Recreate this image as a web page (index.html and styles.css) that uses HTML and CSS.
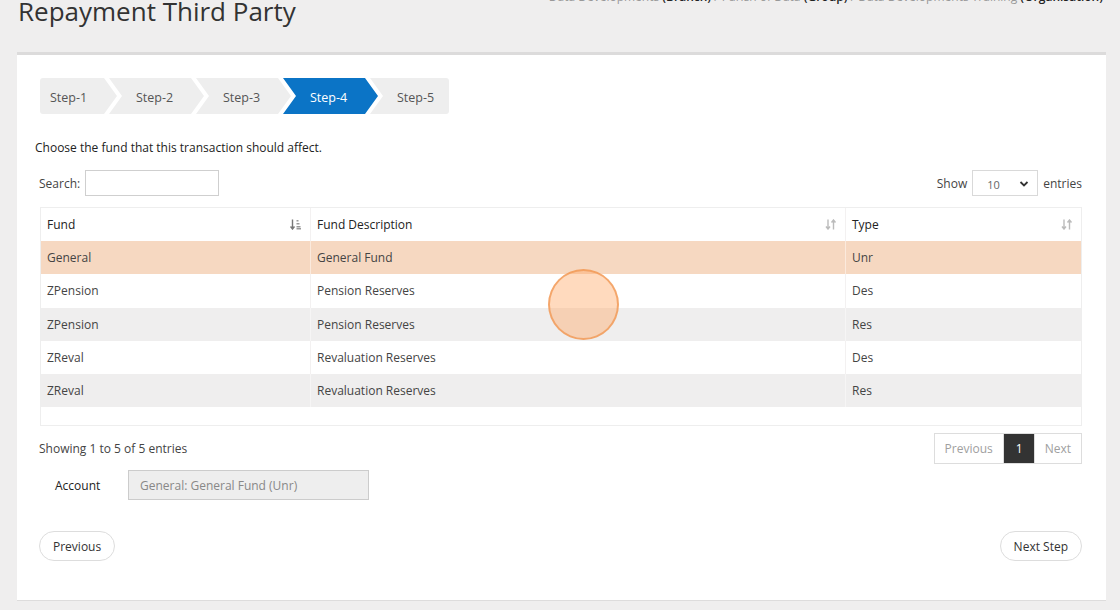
FILE: index.html
```html
<!DOCTYPE html>
<html>
<head>
<meta charset="utf-8">
<link rel="stylesheet" href="styles.css">
</head>
<body>
<div class="page">
  <div class="header">
    <h1 class="title">Repayment Third Party</h1>
    <div class="crumbs">Data Developments <b>(Branch)</b> / Parish of Data <b>(Group)</b> / Data Developments Training <b>(Organisation)</b></div>
  </div>
  <div class="card">
    <div class="steps">
      <div class="step first">Step-1</div>
      <div class="step">Step-2</div>
      <div class="step">Step-3</div>
      <div class="step active">Step-4</div>
      <div class="step last">Step-5</div>
    </div>
    <p class="intro">Choose the fund that this transaction should affect.</p>
    <div class="controls">
      <label class="search">Search: <span class="search-input"></span></label>
      <div class="length">Show <span class="select"><span>10</span><svg width="10" height="8" viewBox="0 0 10 8"><path d="M1.5 2 L5 5.5 L8.5 2" fill="none" stroke="#333" stroke-width="1.8"/></svg></span> entries</div>
    </div>
    <div class="table-wrap">
      <div class="row head">
        <div class="cell c1">Fund<svg class="sort" width="12" height="11" viewBox="0 0 12 11"><path d="M2.5 0.5 V9.5 M0.5 7.5 L2.5 10 L4.5 7.5" fill="none" stroke="#777" stroke-width="1.4"/><rect x="6.5" y="1" width="2" height="1.5" fill="#999"/><rect x="6.5" y="4" width="3" height="1.5" fill="#999"/><rect x="6.5" y="7" width="4" height="1.5" fill="#999"/><rect x="6.5" y="9" width="4.5" height="1.5" fill="#999"/></svg></div>
        <div class="cell c2">Fund Description<svg class="sort faint" width="12" height="11" viewBox="0 0 12 11"><path d="M3 0.5 V10 M1 7.5 L3 10 L5 7.5 M8.5 10.5 V1 M6.5 3.5 L8.5 1 L10.5 3.5" fill="none" stroke="#bbb" stroke-width="1.4"/></svg></div>
        <div class="cell c3">Type<svg class="sort faint" width="12" height="11" viewBox="0 0 12 11"><path d="M3 0.5 V10 M1 7.5 L3 10 L5 7.5 M8.5 10.5 V1 M6.5 3.5 L8.5 1 L10.5 3.5" fill="none" stroke="#bbb" stroke-width="1.4"/></svg></div>
      </div>
      <div class="row selected"><div class="cell c1">General</div><div class="cell c2">General Fund</div><div class="cell c3">Unr</div></div>
      <div class="row"><div class="cell c1">ZPension</div><div class="cell c2">Pension Reserves</div><div class="cell c3">Des</div></div>
      <div class="row odd"><div class="cell c1">ZPension</div><div class="cell c2">Pension Reserves</div><div class="cell c3">Res</div></div>
      <div class="row"><div class="cell c1">ZReval</div><div class="cell c2">Revaluation Reserves</div><div class="cell c3">Des</div></div>
      <div class="row odd"><div class="cell c1">ZReval</div><div class="cell c2">Revaluation Reserves</div><div class="cell c3">Res</div></div>
      <div class="table-foot"></div>
      <div class="click-marker"></div>
    </div>
    <div class="info-row">
      <div class="info">Showing 1 to 5 of 5 entries</div>
      <div class="pager"><span class="pg">Previous</span><span class="pg current">1</span><span class="pg">Next</span></div>
    </div>
    <div class="account">
      <span class="acc-label">Account</span>
      <span class="acc-input">General: General Fund (Unr)</span>
    </div>
    <div class="nav">
      <span class="btn">Previous</span>
      <span class="btn">Next Step</span>
    </div>
  </div>
</div>
</body>
</html>
```
FILE: styles.css
```css
* { box-sizing: border-box; }
html, body { margin: 0; padding: 0; }
body {
  background: #efeeee;
  font-family: "Open Sans", "Liberation Sans", sans-serif;
  font-size: 12px;
  color: #333;
  width: 1120px;
  height: 610px;
  overflow: hidden;
}
.page { padding: 0 14px 0 17px; }
.header {
  height: 52px;
  display: flex;
  justify-content: space-between;
  align-items: flex-start;
}
.title {
  margin: -4px 0 0 1px;
  font-size: 26px;
  font-weight: 400;
  color: #333;
  line-height: 31px;
  white-space: nowrap;
}
.crumbs {
  margin-top: -11px;
  margin-right: 3px;
  color: #999;
  font-size: 12px;
  line-height: 16px;
  white-space: nowrap;
}
.crumbs b { color: #222; font-weight: 600; }
.card {
  background: #fff;
  border-top: 3px solid #dcdbdb;
  border-bottom: 1px solid #dddcdc;
  height: 549px;
  padding: 23px 24px 0 23px;
  position: relative;
}
.steps {
  display: flex;
  height: 36px;
}
.step {
  height: 36px;
  line-height: 36px;
  padding-top: 2px;
  width: 95px;
  margin-right: -8px;
  padding-left: 27px;
  background: #eeeeee;
  color: #555;
  font-size: 12.5px;
  clip-path: polygon(0 0, calc(100% - 13px) 0, 100% 50%, calc(100% - 13px) 100%, 0 100%, 13px 50%);
}
.step.first {
  width: 77px;
  padding-left: 10px;
  border-radius: 3px 0 0 3px;
  clip-path: polygon(0 0, calc(100% - 13px) 0, 100% 50%, calc(100% - 13px) 100%, 0 100%);
}
.step.last {
  width: 79px;
  margin-right: 0;
  border-radius: 0 3px 3px 0;
  clip-path: polygon(0 0, 100% 0, 100% 100%, 0 100%, 13px 50%);
}
.step.active { background: #0b74c6; color: #fff; }
.intro {
  margin: 26px 0 0 -5px;
  line-height: 16px;
  color: #222;
}
.controls {
  margin-top: 14px;
  display: flex;
  justify-content: space-between;
  align-items: center;
  height: 26px;
}
.search { display: flex; align-items: center; gap: 5px; color: #444; margin-left: -1px; }
.search-input {
  display: inline-block;
  width: 134px;
  height: 26px;
  border: 1px solid #cfcfcf;
}
.length { display: flex; align-items: center; gap: 5px; color: #444; }
.select {
  display: inline-flex;
  align-items: center;
  justify-content: space-between;
  width: 66px;
  height: 26px;
  border: 1px solid #d9d9d9;
  padding: 2px 8px 0 14px;
  font-size: 11px;
  color: #666;
}
.table-wrap {
  margin-top: 11px;
  position: relative;
  border: 1px solid #eeeeee;
}
.row {
  display: flex;
  height: 33.3px;
  align-items: stretch;
  color: #444;
}
.row.head { color: #222; height: 33px; }
.row.selected { background: #f6d8c1; }
.row.odd { background: #efeeee; }
.cell {
  display: flex;
  align-items: center;
  justify-content: space-between;
  padding: 0 7px 0 6px;
  border-left: 1px solid #f3f1f1;
}
.cell:first-child { border-left: none; }
.row.selected .cell { border-left-color: #fbeadd; }
.row.odd .cell { border-left-color: #f6f5f5; }
.c1 { width: 269px; padding-right: 8px; }
.c2 { width: 535px; padding-right: 8px; }
.c3 { flex: 1; padding-right: 8px; }
.sort { flex: none; }
.table-foot { height: 18px; }
.click-marker {
  position: absolute;
  left: 507px;
  top: 61px;
  width: 71px;
  height: 71px;
  border-radius: 50%;
  background: rgba(255, 168, 100, 0.42);
  border: 2.5px solid rgba(240, 150, 80, 0.75);
}
.info-row {
  margin-top: 7px;
  display: flex;
  justify-content: space-between;
  align-items: center;
  height: 31px;
}
.info { color: #444; margin-left: -1px; }
.pager { display: flex; height: 31px; border: 1px solid #dddddd; }
.pg {
  display: flex;
  align-items: center;
  padding: 0 10px;
  color: #a0a0a0;
  font-size: 12px;
}
.pg + .pg { border-left: 1px solid #dddddd; }
.pg.current { background: #333; color: #fff; padding: 0 11px 0 12px; }
.account {
  margin-top: 6px;
  display: flex;
  align-items: center;
  height: 30px;
}
.acc-label { width: 88px; padding-left: 15px; color: #222; }
.acc-input {
  display: flex;
  align-items: center;
  width: 241px;
  height: 30px;
  background: #eeeeee;
  border: 1px solid #cccccc;
  padding-left: 11px;
  color: #888;
}
.nav {
  margin-top: 31px;
  display: flex;
  justify-content: space-between;
}
.btn {
  display: inline-flex;
  align-items: center;
  height: 30px;
  padding: 0 13px;
  border: 1px solid #dddddd;
  border-radius: 15px;
  color: #333;
  background: #fff;
  margin-left: -1px;
}
```
